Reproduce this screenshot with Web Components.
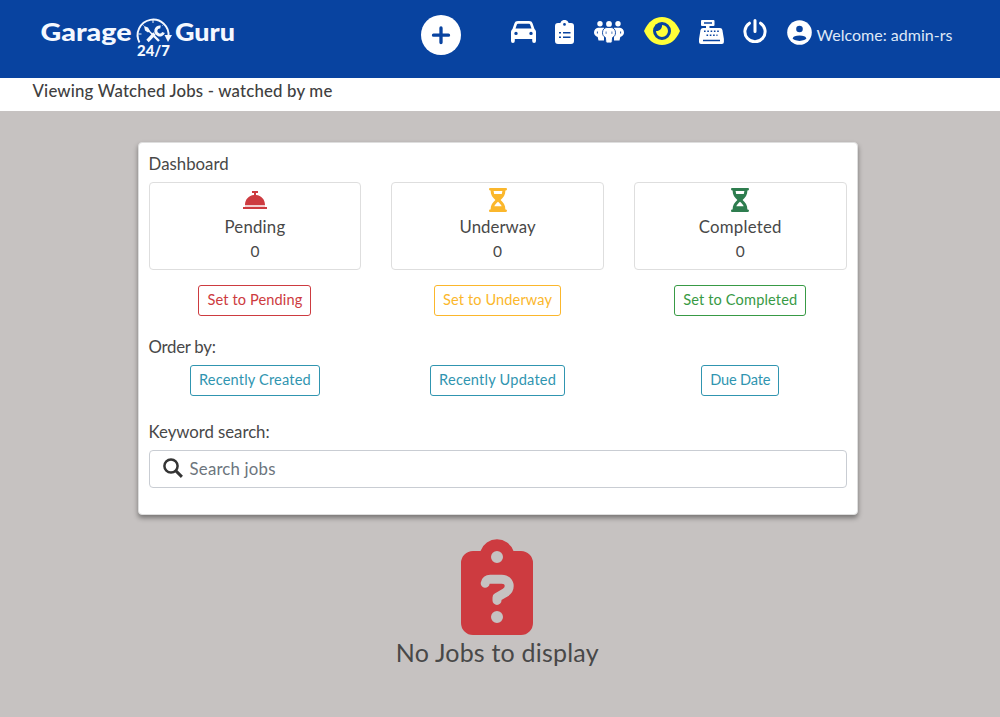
<!DOCTYPE html>
<html lang="en"><head><meta charset="utf-8"><title>Garage Guru 24/7</title>
<style>html,body{margin:0;height:100%;background:#c6c2c1}body{font:400 16.8px/24px Lato,"Open Sans",sans-serif;color:#484848;overflow:hidden}</style></head>
<body><garage-app></garage-app>
<script>
const ICONS = {
plus:[40,40,'<circle cx="20" cy="20" r="20" fill="#fff"/><path d="M20 13v14.500M12.500 20.200h15" stroke="#0843a0" stroke-width="3.300" stroke-linecap="round"/>'],
car:[25,22,'<path fill="currentColor" fill-rule="evenodd" d="M7 0h11c2 0 3 .8 3.600 2.500L23.500 8c1 .8 1.500 2 1.500 3.200V20a1.900 1.900 0 0 1-3.800 0v-2H3.800v2A1.900 1.900 0 0 1 0 20v-8.800C0 10 .5 8.800 1.500 8l1.900-5.500C4 .8 5 0 7 0zM7 2.800c-.6 0-.9.300-1.100.8L4.500 7.500h16l-1.400-3.900c-.2-.5-.5-.8-1.100-.8zM5 10.700a1.700 1.700 0 1 0 0 3.400 1.700 1.700 0 0 0 0-3.400zm15 0a1.700 1.700 0 1 0 0 3.400 1.700 1.700 0 0 0 0-3.400z"/>'],
list:[19,24,'<path fill="currentColor" fill-rule="evenodd" d="M3 3h2.300a4.400 4.400 0 0 1 8.400 0H16a3 3 0 0 1 3 3v15a3 3 0 0 1-3 3H3a3 3 0 0 1-3-3V6a3 3 0 0 1 3-3zM9.500 3a1.400 1.400 0 1 0 0 2.800 1.400 1.400 0 0 0 0-2.800z"/><path d="M4 12.700h2M4 17.300h2M8 12.700h7.500M8 17.300h7.500" stroke="#0843a0" stroke-width="1.500"/>'],
people:[30,22,'<g fill="currentColor"><circle cx="6" cy="2.800" r="2.700"/><circle cx="24" cy="2.800" r="2.700"/><path d="M4 6.800h6V19.500H4.500L3.700 16C1.500 15.200 0 13.800 0 11.500S1.800 7 4 6.800zM26 6.800h-6v12.700h5.500l.8-3.500c2.200-.8 3.700-2.200 3.700-4.500s-1.800-4.500-4-4.700z"/><path d="M3.400 10.500v2M26.600 10.500v2" stroke="#0843a0" stroke-width=".9"/><path stroke="#0843a0" stroke-width=".9" d="M12.800 6.500h4.400c2.600 0 4.300 2.300 4.300 5.300 0 2.400-1.200 3.700-2.900 4.700l-.4 4q-.2 1.500-1.600 1.500h-3.200q-1.400 0-1.600-1.500l-.4-4c-1.700-1-2.900-2.300-2.900-4.700 0-3 1.700-5.300 4.300-5.300z"/><circle cx="15" cy="2.900" r="2.900"/><path d="M12.100 10.500v2.400M17.900 10.500v2.400" stroke="#0843a0" stroke-width=".7"/></g>'],
eye:[36,28,'<path d="M0 14C4 5 10 0 18 0s14 5 18 14c-4 9-10 14-18 14S4 23 0 14z" fill="#ffff38"/><circle cx="18" cy="14" r="7.500" fill="#ffff38" stroke="#0843a0" stroke-width="3"/><path d="M18 7.500c.5 4-2.500 6.900-6.500 6.500V7.500z" fill="#0843a0"/>'],
register:[25,24,'<path fill="currentColor" fill-rule="evenodd" d="M3 0h11.500q1 0 1 1v4q0 1-1 1h-4v2H21q2 0 2.400 2l1.500 9v3q0 2-2 2H2q-2 0-2-2v-3l1.500-9Q2 8 4 8h3V6H3Q2 6 2 5V1q0-1 1-1zM5 2.200v1.600h8V2.200zM4 19.700v1.500h17v-1.500z"/><path d="M5 11.300h15M7.500 15.200h11" stroke="#0843a0" stroke-width="1.600" stroke-dasharray="1.600 1.700"/>'],
power:[24,24,'<path d="M12 1.600v11M6.500 4.200A10.100 10.100 0 1 0 17.500 4.200" fill="none" stroke="currentColor" stroke-width="3" stroke-linecap="round"/>'],
user:[25,25,'<circle cx="12.500" cy="12.500" r="12.300" fill="currentColor"/><circle cx="12.500" cy="9" r="3.300" fill="#0843a0"/><ellipse cx="12.500" cy="18.200" rx="6.600" ry="2.700" fill="#0843a0"/>'],
bell:[24,18,'<path d="M9 0h6v2h-2v2c5.500.5 9 4.500 9 10H2C2 8.500 5.500 4.500 11 4V2H9z" fill="currentColor"/><path d="M2 14h20v2H2z" fill="currentColor" opacity=".25"/><path d="M0 16h24v2H0z" fill="currentColor"/>'],
hourglass:[18,24,'<path fill="currentColor" fill-rule="evenodd" d="M1 0h16q1 0 1 1t-1 1.500h-.6c0 4.500-2 7-4.800 9.500 2.800 2.500 4.800 5 4.800 9.500h.6q1 .5 1 1.300T17 24H1q-1 0-1-1.200t1-1.300h.6c0-4.500 2-7 4.800-9.500C3.600 9.500 1.600 7 1.600 2.500H1Q0 2 0 1t1-1zM4.600 3l.6 3h7.600l.6-3zM9 13.800C7.400 15.300 6 16.700 5.300 18.200h7.400C12 16.700 10.600 15.300 9 13.800z"/>'],
search:[20,20,'<circle cx="8" cy="8" r="6.600" fill="none" stroke="currentColor" stroke-width="2.500"/><path d="M12.900 12.900l6 6" stroke="currentColor" stroke-width="2.900"/>'],
question:[72,96,'<path fill="currentColor" fill-rule="evenodd" d="M12 12h7.500a17.500 17.500 0 0 1 33 0H60a12 12 0 0 1 12 12v60a12 12 0 0 1-12 12H12A12 12 0 0 1 0 84V24a12 12 0 0 1 12-12zM36 12a6 6 0 1 0 0 12 6 6 0 0 0 0-12zm0 60a6 6 0 1 0 0 12 6 6 0 0 0 0-12z"/><path d="M24.200 44.300c.3-2.500 2.300-4 5-4h11.500c4.700 0 7.500 3 7.500 6.800 0 3-1.500 5-4 6.500L36 58.400v3" fill="none" stroke="#c6c2c1" stroke-width="9" stroke-linecap="round" stroke-linejoin="round"/>']
};
const define=(tag,html,setup)=>customElements.define(tag,class extends HTMLElement{
 connectedCallback(){if(this.shadowRoot)return;const t=document.createElement('template');t.innerHTML=typeof html==='function'?html(this):html;this.attachShadow({mode:'open'}).append(t.content.cloneNode(true));if(setup)setup(this);}
});
define('ui-icon',el=>{const [w,h,p]=ICONS[el.getAttribute('name')];return `<style>:host{display:block;flex:none;width:${w}px;height:${h}px}svg{display:block}</style><svg width="${w}" height="${h}" viewBox="0 0 ${w} ${h}">${p}</svg>`;});
/* Tracks its text out so that the line has the given width. */
define('fit-text','<style>:host{display:block;flex:none;white-space:nowrap}span{display:inline-block}</style><span><slot></slot></span>',el=>{
 const s=el.shadowRoot.querySelector('span'),w=+el.getAttribute('w');el.style.width=w+'px';
 s.style.letterSpacing=(w-s.getBoundingClientRect().width)/el.textContent.length+'px';});
define('brand-logo',`<style>:host{display:block;width:196px;height:46px}svg{display:block}text{font-family:Lato,sans-serif;font-weight:900;fill:#f4f8ff}</style>
<svg width="196" height="46" viewBox="40 14 196 46"><text x="40.500" y="41" font-size="25" textLength="91" lengthAdjust="spacingAndGlyphs">Garage</text><text x="175" y="41" font-size="25" textLength="60" lengthAdjust="spacingAndGlyphs">Guru</text>
<g fill="none" stroke="#f4f8ff"><path d="M139.500 42.500A15.500 15.500 0 1 1 168.500 37" stroke-width="1.900"/><path d="M153 20v3M138.500 34h3M142.500 24.500l1 1M163.500 24.500l-1 1" stroke-width="1"/><path d="M147 29l5 5" stroke-width="1.500"/><path d="M152 34l7 7" stroke-width="2.400"/><path d="M154.500 33.500L147.500 41" stroke-width="3.300"/><path d="M160.500 27a4 4 0 1 0 3 5.500" stroke-width="3"/></g><path d="M164.500 35h7.500l-4 7z" fill="#f4f8ff"/><path d="M144 26l4 1.500 2 3.500-2 1.500-3-2z" fill="#f4f8ff"/>
<text x="137" y="55.500" font-size="14.500" textLength="33" lengthAdjust="spacingAndGlyphs">24/7</text></svg>`);
define('top-bar',`<style>:host{display:flex;align-items:flex-start;height:78px;box-sizing:border-box;padding:14px 0 0 40px;background:#0843a0;color:#fff}ui-icon{margin-right:19px}fit-text{font-size:16px;margin:9px 0 0 5px;color:#dfe8f7}</style>
<brand-logo></brand-logo>
<ui-icon name="plus" style="margin:1px 50px 0 185px"></ui-icon><ui-icon name="car" style="margin-top:7px"></ui-icon><ui-icon name="list" style="margin-top:6px"></ui-icon><ui-icon name="people" style="margin:7px 20px 0 .5px"></ui-icon><ui-icon name="eye" style="margin-top:3px"></ui-icon><ui-icon name="register" style="margin:6px 19.500px 0 0"></ui-icon><ui-icon name="power" style="margin-top:5px"></ui-icon><ui-icon name="user" style="margin:5.500px 0 0 .5px"></ui-icon><fit-text w="136">Welcome: admin-rs</fit-text>`);
define('page-title',`<style>:host{display:block;height:33px;background:#fff;padding-left:32.500px;box-sizing:border-box;font-weight:500;line-height:26px;color:#404040}</style><slot></slot>`);
define('stat-card',`<style>:host{display:flex;flex-direction:column;align-items:center;height:88px;box-sizing:border-box;border:1px solid #dedede;border-radius:4px;padding-top:5px}.icon{height:27px;display:flex;align-items:flex-start}fit-text{line-height:24px}.n{line-height:25px;font-size:15.500px}</style><div class="icon"><slot name="icon"></slot></div><slot></slot><div class="n"><slot name="count"></slot></div>`);
define('outline-button',`<style>:host{display:block;justify-self:center}button{display:block;font:inherit;font-size:14.600px;line-height:21px;color:inherit;background:#fff;border:1px solid;border-radius:3px;padding:3px 8px 5px;height:31px;box-sizing:border-box}</style><button><slot></slot></button>`);
define('search-field',`<style>:host{display:flex;height:38px;box-sizing:border-box;border:1px solid #c9cdd3;border-radius:4px;padding:7px 13px;gap:7px;color:#6c757d}ui-icon{color:#343434}::slotted(*){margin-top:-1px}</style><ui-icon name="search"></ui-icon><slot></slot>`);
define('dashboard-panel',`<style>:host{display:block;width:720px;height:373px;box-sizing:border-box;padding:9px 10.400px 9px 9.600px;border:1px solid #dedede;border-radius:4px;background:#fff;box-shadow:0 3px 5px rgba(0,0,0,.4)}.row{display:grid;grid-template-columns:repeat(3,1fr);column-gap:30px}.stats{margin:6px 0 15px}.order{margin:6px 0 24px}.states{margin-bottom:19px}search-field{margin:6px -.4px 0 0}</style>
<fit-text w="80">Dashboard</fit-text>
<div class="row stats">
<stat-card><ui-icon slot="icon" name="bell" style="color:#cd3b40;margin-top:3px"></ui-icon><fit-text w="61">Pending</fit-text><span slot="count">0</span></stat-card>
<stat-card><ui-icon slot="icon" name="hourglass" style="color:#fbb72c"></ui-icon><fit-text w="76">Underway</fit-text><span slot="count">0</span></stat-card>
<stat-card><ui-icon slot="icon" name="hourglass" style="color:#2e7d4f"></ui-icon><fit-text w="83">Completed</fit-text><span slot="count">0</span></stat-card></div>
<div class="row states"><outline-button style="color:#cd3b40"><fit-text w="95">Set to Pending</fit-text></outline-button><outline-button style="color:#fbb72c"><fit-text w="109">Set to Underway</fit-text></outline-button><outline-button style="color:#389a45"><fit-text w="114">Set to Completed</fit-text></outline-button></div>
<fit-text w="67">Order by:</fit-text>
<div class="row order" style="color:#3095b0"><outline-button><fit-text w="112">Recently Created</fit-text></outline-button><outline-button><fit-text w="117">Recently Updated</fit-text></outline-button><outline-button><fit-text w="60">Due Date</fit-text></outline-button></div>
<fit-text w="121">Keyword search:</fit-text>
<search-field><fit-text w="86">Search jobs</fit-text></search-field>`);
define('empty-state',`<style>:host{display:flex;flex-direction:column;align-items:center}ui-icon{color:#cd3b40}fit-text{font-size:25px;line-height:34px}</style><ui-icon name="question"></ui-icon><fit-text w="203">No Jobs to display</fit-text>`);
define('garage-app',`<style>:host{display:block}main{width:720px;margin:31px 0 0 138px}empty-state{margin:24px 1.400px 0 0}</style><top-bar></top-bar><page-title><fit-text w="300">Viewing Watched Jobs - watched by me</fit-text></page-title><main><dashboard-panel></dashboard-panel><empty-state></empty-state></main>`);
</script></body></html>
